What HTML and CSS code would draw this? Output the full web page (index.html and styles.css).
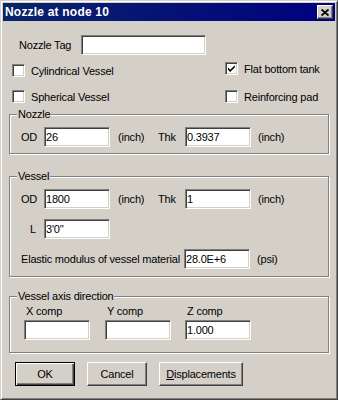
FILE: index.html
```html
<!DOCTYPE html>
<html lang="en">
<head>
  <meta charset="UTF-8">
  <title>Nozzle at node 10</title>
  <link rel="stylesheet" href="styles.css">
</head>
<body>
  <div class="window">
    <div class="titlebar">
      <span class="title">Nozzle at node 10</span>
      <button class="close" type="button">
        <svg width="8" height="7" viewBox="0 0 8 7"><path d="M0.5 0.5 L7.5 6.5 M7.5 0.5 L0.5 6.5" stroke="#000" stroke-width="1.8" fill="none"/></svg>
      </button>
    </div>

    <div class="content">
      <div class="tag-row">
        <label for="tag">Nozzle Tag</label>
        <input type="text" id="tag" class="field tag-field">
      </div>

      <div class="checks">
        <label class="check"><span class="box"></span>Cylindrical Vessel</label>
        <label class="check flat"><span class="box">
          <svg width="9" height="9" viewBox="0 0 9 9"><path d="M1 3.5 L3.2 5.8 L7.8 1.2 L7.8 3.4 L3.2 8 L1 5.7 Z" fill="#000"/></svg>
        </span>Flat bottom tank</label>
        <label class="check"><span class="box"></span>Spherical Vessel</label>
        <label class="check"><span class="box"></span>Reinforcing pad</label>
      </div>

      <fieldset class="group nozzle">
        <legend>Nozzle</legend>
        <div class="group-body">
          <div class="row">
            <span class="lbl">OD</span>
            <input type="text" class="field" value="26">
            <span class="unit">(inch)</span>
            <span class="lbl-thk">Thk</span>
            <input type="text" class="field" value="0.3937">
            <span class="unit-end">(inch)</span>
          </div>
        </div>
      </fieldset>

      <fieldset class="group vessel">
        <legend>Vessel</legend>
        <div class="group-body">
          <div class="row">
            <span class="lbl">OD</span>
            <input type="text" class="field" value="1800">
            <span class="unit">(inch)</span>
            <span class="lbl-thk">Thk</span>
            <input type="text" class="field" value="1">
            <span class="unit-end">(inch)</span>
          </div>
          <div class="row">
            <span class="lbl lbl-l">L</span>
            <input type="text" class="field" value="3'0''">
          </div>
          <div class="row">
            <span class="lbl-long">Elastic modulus of vessel material</span>
            <input type="text" class="field" value="28.0E+6">
            <span class="unit-end">(psi)</span>
          </div>
        </div>
      </fieldset>

      <fieldset class="group axis">
        <legend>Vessel axis direction</legend>
        <div class="axis-grid">
          <div class="comp"><span>X comp</span><input type="text" class="field"></div>
          <div class="comp"><span>Y comp</span><input type="text" class="field"></div>
          <div class="comp"><span>Z comp</span><input type="text" class="field" value="1.000"></div>
        </div>
      </fieldset>

      <div class="buttons">
        <button type="button" class="btn default">OK</button>
        <button type="button" class="btn">Cancel</button>
        <button type="button" class="btn wide"><u>D</u>isplacements</button>
      </div>
    </div>
  </div>
</body>
</html>
```

FILE: styles.css
```css
body {
  margin: 0;
  font-family: "Liberation Sans", Arial, sans-serif;
  font-size: 11px;
  letter-spacing: -0.2px;
  color: #000;
  background: #d4d0c8;
}
.window {
  width: 338px;
  height: 400px;
  box-sizing: border-box;
  background: #d4d0c8;
  border: 1px solid;
  border-color: #d4d0c8 #404040 #404040 #d4d0c8;
  box-shadow: inset 1px 1px #fff, inset -1px -1px #808080;
  padding: 2px;
}
.titlebar {
  height: 18px;
  background: linear-gradient(to right, #0a246a, #000080);
  display: flex;
  align-items: center;
  justify-content: space-between;
  padding: 0 2px;
}
.title {
  color: #fff;
  font-weight: bold;
  font-size: 12px;
  letter-spacing: 0.2px;
}
.close {
  width: 16px;
  height: 14px;
  box-sizing: border-box;
  padding: 0;
  background: #d4d0c8;
  border: 1px solid;
  border-color: #fff #404040 #404040 #fff;
  box-shadow: inset -1px -1px #808080;
  display: flex;
  align-items: center;
  justify-content: center;
}
.tag-row {
  display: flex;
  align-items: center;
  margin-top: 14px;
  padding-left: 16px;
}
.tag-row label {
  width: 62px;
}
.field {
  width: 66px;
  height: 20px;
  box-sizing: border-box;
  margin: 0;
  padding: 0 1px;
  border: 1px solid;
  border-color: #808080 #fff #fff #808080;
  box-shadow: inset 1px 1px #404040, inset -1px -1px #d4d0c8;
  background: #fff;
  font: inherit;
  letter-spacing: inherit;
  color: #000;
  outline: none;
}
.tag-field {
  width: 125px;
}
.checks {
  display: grid;
  grid-template-columns: 213px auto;
  row-gap: 13px;
  margin-top: 9px;
  padding-left: 9px;
}
.check {
  display: flex;
  align-items: center;
  gap: 6px;
  height: 13px;
  white-space: nowrap;
}
.flat {
  margin-top: -2px;
}
.box {
  width: 13px;
  height: 13px;
  box-sizing: border-box;
  border: 1px solid;
  border-color: #808080 #fff #fff #808080;
  box-shadow: inset 1px 1px #404040, inset -1px -1px #d4d0c8;
  background: #fff;
  display: flex;
  align-items: center;
  justify-content: center;
}
.group {
  margin: 5px 6px 0;
  padding: 0;
  min-width: 0;
  border: 1px solid #808080;
  box-shadow: inset 1px 1px #fff, 1px 1px #fff;
}
.group legend {
  margin-left: 7px;
  padding: 0 1px;
  background: #d4d0c8;
}
.group-body {
  padding: 7px 0 6px 11px;
}
.row {
  display: flex;
  align-items: center;
  white-space: nowrap;
}
.row + .row {
  margin-top: 10px;
}
.lbl {
  width: 23px;
}
.lbl-l {
  box-sizing: border-box;
  padding-left: 9px;
}
.unit {
  width: 40px;
  margin-left: 8px;
}
.lbl-thk {
  width: 27px;
}
.unit-end {
  margin-left: 7px;
}
.lbl-long {
  width: 163px;
}
.vessel {
  margin-top: 16px;
}
.vessel .group-body {
  padding-bottom: 7px;
}
.axis {
  margin-top: 13px;
}
.axis-grid {
  display: grid;
  grid-template-columns: 81px 80px 66px;
  padding: 3px 0 12px 14px;
}
.comp span {
  display: block;
  padding-left: 2px;
  margin-bottom: 3px;
}
.buttons {
  display: flex;
  gap: 12px;
  margin-top: 9px;
  padding-left: 12px;
}
.btn {
  width: 60px;
  height: 24px;
  box-sizing: border-box;
  padding: 0;
  font: inherit;
  letter-spacing: inherit;
  color: #000;
  background: #d4d0c8;
  border: 1px solid;
  border-color: #fff #404040 #404040 #fff;
  box-shadow: inset -1px -1px #808080;
}
.btn.default {
  border-color: #000;
  box-shadow: inset 1px 1px #fff, inset -1px -1px #404040, inset -2px -2px #808080;
}
.btn.wide {
  width: 84px;
}
```
